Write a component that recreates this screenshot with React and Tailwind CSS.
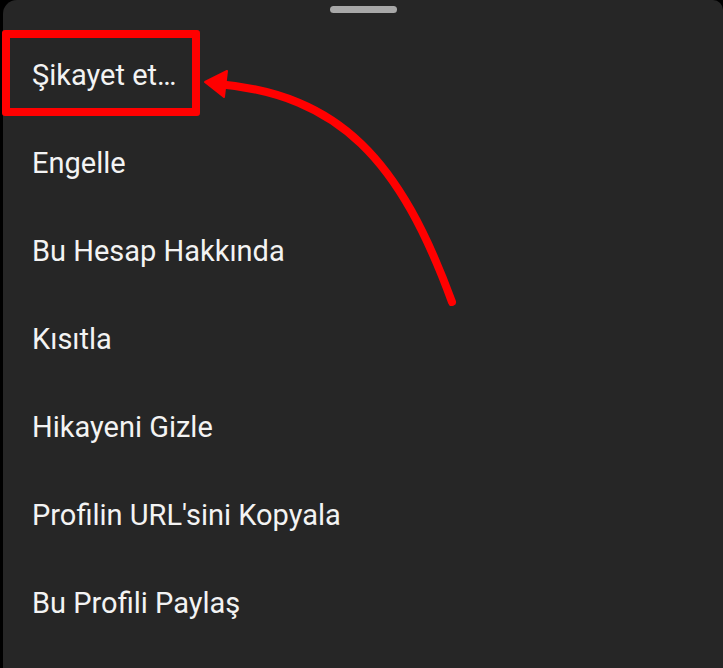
const items = [
    'Şikayet et…',
    'Engelle',
    'Bu Hesap Hakkında',
    'Kısıtla',
    'Hikayeni Gizle',
    "Profilin URL'sini Kopyala",
    'Bu Profili Paylaş',
]

export default function App() {
    return (
        <div className="h-[668px] w-[723px] bg-black overflow-hidden" style={{ fontFamily: 'Roboto, "Noto Sans", sans-serif' }}>
            <div className="relative ml-[3px] h-full bg-[#262626] rounded-tl-[14px] rounded-tr-[10px]">
                {/* sheet handle */}
                <div className="flex justify-center pt-[6px]">
                    <div className="w-[67px] h-[7px] rounded-full bg-[#a8a8a8]" />
                </div>

                <div className="mt-[19px] flex flex-col">
                    {items.map((label) => (
                        <div key={label} className="h-[88px] flex items-center pl-[29px] text-[29px] text-[#f3f3f3]">
                            {label}
                        </div>
                    ))}
                </div>

                {/* highlight box */}
                <div className="absolute left-[-1px] top-[30px] w-[198px] h-[86px] border-[8px] border-[#ff0000] rounded-[3px]" />

                {/* arrow */}
                <svg className="absolute left-[-3px] top-0" width="723" height="668" viewBox="0 0 723 668">
                    <path d="M452 302 C 400 160, 340 95, 218 84" fill="none" stroke="#ff0000" strokeWidth="8" strokeLinecap="round" />
                    <path d="M205 82 L227 71 L224 97 Z" fill="#ff0000" stroke="#ff0000" strokeWidth="2" strokeLinejoin="round" />
                </svg>
            </div>
        </div>
    )
}
